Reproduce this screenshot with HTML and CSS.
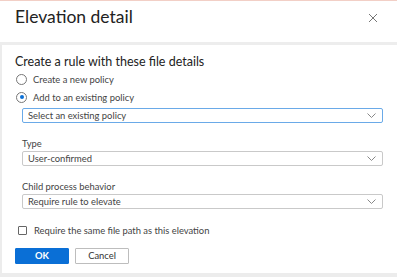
FILE: index.html
```html
<!DOCTYPE html>
<html>
<head>
<meta charset="utf-8">
<link rel="stylesheet" href="styles.css">
</head>
<body>
<div class="dialog">
  <div class="header">
    <h1 class="title">Elevation detail</h1>
    <svg class="close" width="10" height="10" viewBox="0 0 10 10"><path d="M1 1L9 9M9 1L1 9" stroke="#777" stroke-width="1" fill="none"/></svg>
  </div>
  <div class="body">
    <h2 class="section">Create a rule with these file details</h2>
    <label class="radio-row"><span class="radio"></span>Create a new policy</label>
    <label class="radio-row"><span class="radio checked"></span>Add to an existing policy</label>
    <div class="select focused"><span>Select an existing policy</span><svg class="chev" width="9" height="5" viewBox="0 0 9 5"><path d="M0.5 0.5L4.5 4.5L8.5 0.5" stroke="#888" fill="none"/></svg></div>
    <div class="field">
      <div class="label">Type</div>
      <div class="select"><span>User-confirmed</span><svg class="chev" width="9" height="5" viewBox="0 0 9 5"><path d="M0.5 0.5L4.5 4.5L8.5 0.5" stroke="#888" fill="none"/></svg></div>
    </div>
    <div class="field">
      <div class="label">Child process behavior</div>
      <div class="select"><span>Require rule to elevate</span><svg class="chev" width="9" height="5" viewBox="0 0 9 5"><path d="M0.5 0.5L4.5 4.5L8.5 0.5" stroke="#888" fill="none"/></svg></div>
    </div>
    <label class="check-row"><span class="checkbox"></span>Require the same file path as this elevation</label>
    <div class="buttons">
      <button class="btn primary">OK</button>
      <button class="btn">Cancel</button>
    </div>
  </div>
</div>
</body>
</html>
```
FILE: styles.css
```css
html, body { margin: 0; padding: 0; }
body {
  width: 397px; height: 277px; overflow: hidden;
  font-family: "Lato", "Noto Sans", sans-serif;
  color: #333;
  background: #fff;
}
.dialog {
  height: 277px;
  box-sizing: border-box;
  border-top: 1px solid #f2cfc6;
  display: flex; flex-direction: column;
}
.header {
  height: 41px;
  display: flex; align-items: flex-start; justify-content: space-between;
  padding: 0 19px 0 15px;
  border-bottom: 3px solid #ededed;
}
.title {
  margin: 6px 0 0 0;
  font-size: 17.5px; line-height: 20px; font-weight: 400; color: #222;
}
.close { margin-top: 12px; }
.body {
  flex: 1;
  border-left: 2px solid #ececec;
  border-bottom: 4px solid #ececec;
  padding: 9px 14px 0 13px;
  display: flex; flex-direction: column;
}
.section {
  margin: 0 0 0 0;
  font-size: 12.5px; line-height: 16px; font-weight: 400; color: #222;
}
.radio-row {
  display: flex; align-items: center;
  height: 18px; font-size: 9.4px; color: #444;
}
.radio {
  width: 11px; height: 11px; border: 1px solid #777; border-radius: 50%;
  margin: 0 6px 0 1px; box-sizing: border-box; position: relative;
}
.radio.checked::after {
  content: ""; position: absolute; left: 2.5px; top: 2.5px;
  width: 4px; height: 4px; border-radius: 50%; background: #0a6fd6;
}
.select {
  margin-left: 7px;
  height: 15px; box-sizing: border-box;
  border: 1px solid #c9c9c9; border-radius: 2px;
  display: flex; align-items: center; justify-content: space-between;
  padding: 0 6px 0 5px;
  font-size: 9.4px; color: #444;
}
.select.focused { border: 1.5px solid #6aaae8; margin-top: 2px; }
.field { margin-top: 14px; }
.label { margin-left: 7px; font-size: 9.4px; color: #444; height: 13px; line-height: 13px; margin-bottom: 1px; }
.check-row {
  display: flex; align-items: center;
  margin-top: 14px; height: 14px;
  font-size: 9.4px; color: #444;
}
.checkbox {
  width: 7px; height: 7px; border: 1px solid #666; border-radius: 1px;
  margin: 0 7px 0 3px;
}
.buttons { display: flex; gap: 6px; margin-top: 11px; }
.btn {
  width: 54px; height: 16px; box-sizing: border-box;
  font-family: inherit; font-size: 9.4px; color: #333;
  background: #fff; border: 1px solid #bdbdbd; border-radius: 1px;
  padding: 0; line-height: 14px;
}
.btn.primary { background: #0a6fd6; border-color: #0a6fd6; color: #fff; font-weight: 700; }
```
